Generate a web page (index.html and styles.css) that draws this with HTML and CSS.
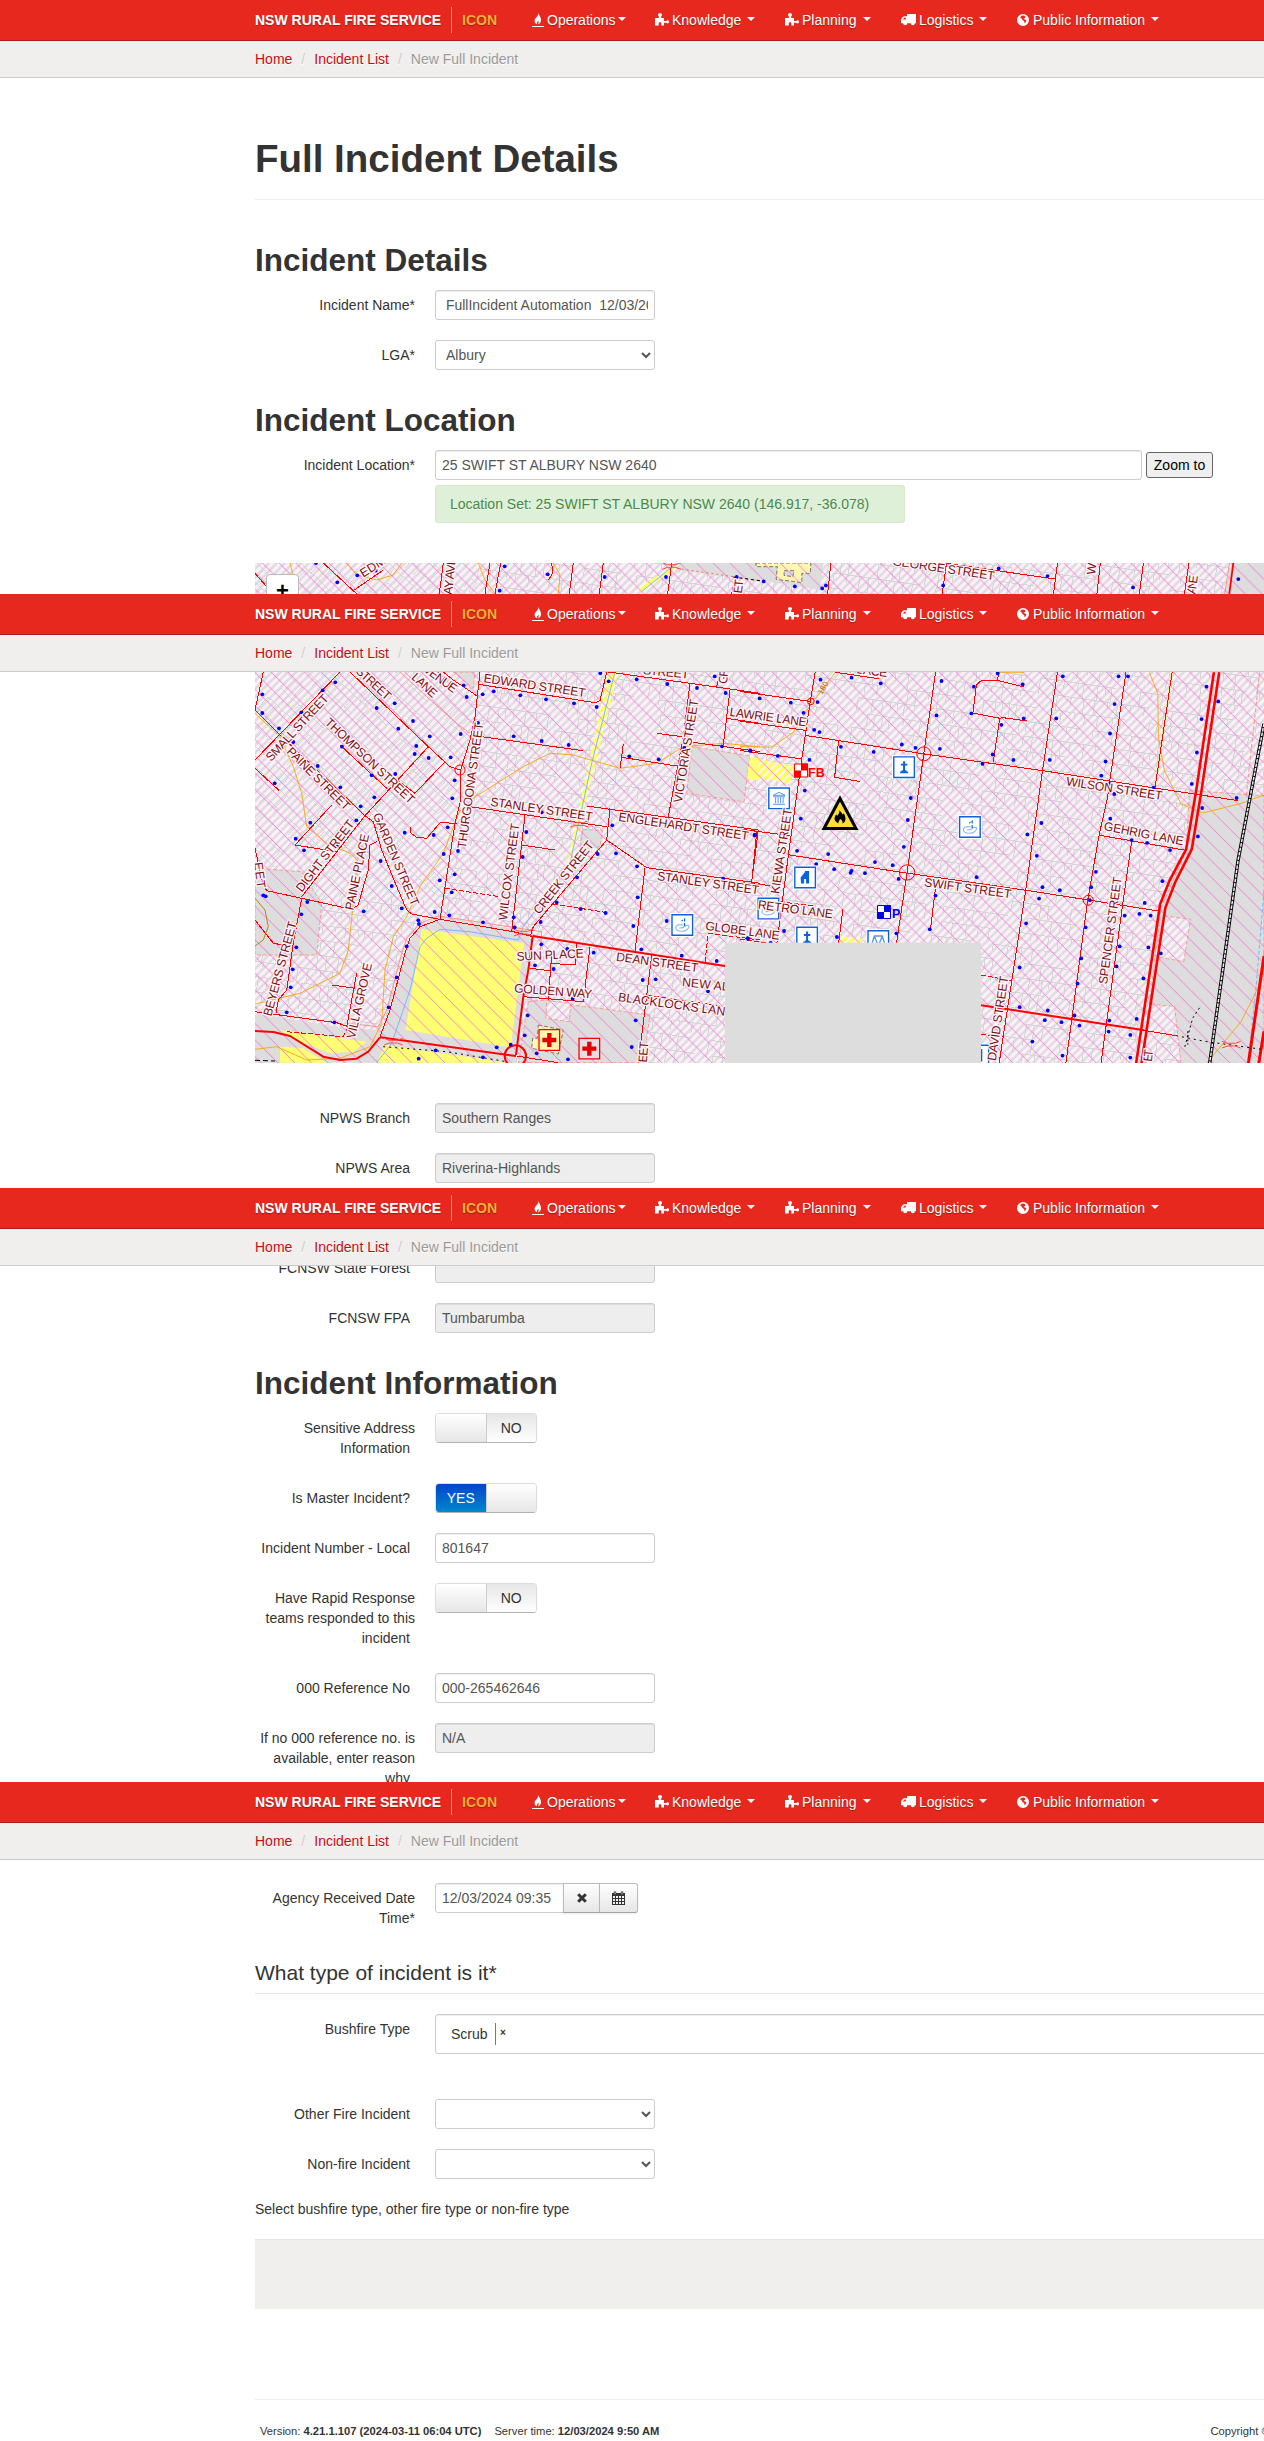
FILE: index.html
```html
<!DOCTYPE html>
<html lang="en">
<head>
<meta charset="utf-8">
<title>New Full Incident - ICON</title>
<link rel="stylesheet" href="styles.css">
</head>
<body>
<svg class="sprite" aria-hidden="true">
  <symbol id="i-fire" viewBox="0 0 12 14"><path d="M6.400 0C7 2.400 9 4 9 7.200c0 2.200-1.200 3.400-2.900 4.200.7-1.500.8-2.700-.1-3.800.1 1.100-1.100 1.700-1.100 2.700 0 .4 0 .7.2 1C3.500 10.800 2.600 9.500 2.600 7.700 2.600 5 6.600 3.600 6.400 0z"/><path d="M0 13h12v1H0z"/></symbol>
  <symbol id="i-puzzle" viewBox="0 0 14 13"><path fill-rule="evenodd" d="M0 5h3.800V3.300C3.300 3 3 2.400 3 1.800 3 .7 3.900 0 5 0s2 .7 2 1.800c0 .6-.3 1.200-.8 1.500V5H9v2.900h2.300c.3-.4.800-.7 1.300-.7.900 0 1.400.7 1.400 1.600s-.5 1.600-1.400 1.600c-.5 0-1-.3-1.300-.7H9v2.800H6.300v-2.100c0-.8-.6-1.200-1.300-1.200s-1.300.4-1.300 1.200v2.100H0z"/></symbol>
  <symbol id="i-truck" viewBox="0 0 15 12"><path fill-rule="evenodd" d="M6 0h9v9.300h-1.200a2 2 0 0 1-4 0H6.200a2 2 0 0 1-4 0H0V6c0-1.600 2.300-3.800 3.500-3.800H6zM1.600 5.600h3.200V3.400h-1z"/><circle cx="4.200" cy="9.700" r="1.400"/><circle cx="11.800" cy="9.700" r="1.400"/></symbol>
  <symbol id="i-globe" viewBox="0 0 12 12"><path fill-rule="evenodd" d="M6 0a6 6 0 1 1 0 12A6 6 0 0 1 6 0zM5 1.700 7 1.500 8.500 2.800 7.800 4.200 6.500 4.500 7.800 5.600 9.500 6.200 8.700 8.300 7.500 9.300 7.200 7.200 5.300 5.800 4.500 4.300 3.300 3.800 3.700 2.500z"/></symbol>
</svg>

<section class="screen">
  <header class="navbar">
    <span class="brand">NSW RURAL FIRE SERVICE</span><span class="app">ICON</span>
    <nav class="menu">
      <a class="tight"><svg class="fire"><use href="#i-fire"/></svg>Operations<i class="caret"></i></a>
      <a><svg class="puzzle"><use href="#i-puzzle"/></svg>Knowledge<i class="caret"></i></a>
      <a><svg class="puzzle"><use href="#i-puzzle"/></svg>Planning<i class="caret"></i></a>
      <a><svg class="truck"><use href="#i-truck"/></svg>Logistics<i class="caret"></i></a>
      <a><svg class="globe"><use href="#i-globe"/></svg>Public Information<i class="caret"></i></a>
    </nav>
  </header>
  <div class="crumbs"><a>Home</a><b>/</b><a>Incident List</a><b>/</b><span>New Full Incident</span></div>
  <main class="content">
    <h1>Full Incident Details</h1>
    <h2>Incident Details</h2>
    <div class="row"><label>Incident Name*</label><input type="text" value=" FullIncident Automation  12/03/2024"></div>
    <div class="row"><label>LGA*</label><select><option>Albury</option></select></div>
    <h2 class="later">Incident Location</h2>
    <div class="row location">
      <label>Incident Location*</label>
      <div>
        <div class="lookup"><input type="text" value="25 SWIFT ST ALBURY NSW 2640"><button>Zoom to</button></div>
        <div class="alert">Location Set: 25 SWIFT ST ALBURY NSW 2640 (146.917, -36.078)</div>
      </div>
    </div>
    <div class="map map-top"><svg class="tiles" viewBox="255 563 1009 31"></svg><span class="zoom-in">+</span></div>
  </main>
</section>

<section class="screen">
  <header class="navbar">
    <span class="brand">NSW RURAL FIRE SERVICE</span><span class="app">ICON</span>
    <nav class="menu">
      <a class="tight"><svg class="fire"><use href="#i-fire"/></svg>Operations<i class="caret"></i></a>
      <a><svg class="puzzle"><use href="#i-puzzle"/></svg>Knowledge<i class="caret"></i></a>
      <a><svg class="puzzle"><use href="#i-puzzle"/></svg>Planning<i class="caret"></i></a>
      <a><svg class="truck"><use href="#i-truck"/></svg>Logistics<i class="caret"></i></a>
      <a><svg class="globe"><use href="#i-globe"/></svg>Public Information<i class="caret"></i></a>
    </nav>
  </header>
  <div class="crumbs"><a>Home</a><b>/</b><a>Incident List</a><b>/</b><span>New Full Incident</span></div>
  <main class="content">
    <div class="map map-main"><svg class="tiles" viewBox="255 672 1009 391"></svg></div>
    <div class="row"><label>NPWS Branch<s></s></label><input type="text" value="Southern Ranges" readonly></div>
    <div class="row"><label>NPWS Area<s></s></label><input type="text" value="Riverina-Highlands" readonly></div>
  </main>
</section>

<section class="screen">
  <header class="navbar">
    <span class="brand">NSW RURAL FIRE SERVICE</span><span class="app">ICON</span>
    <nav class="menu">
      <a class="tight"><svg class="fire"><use href="#i-fire"/></svg>Operations<i class="caret"></i></a>
      <a><svg class="puzzle"><use href="#i-puzzle"/></svg>Knowledge<i class="caret"></i></a>
      <a><svg class="puzzle"><use href="#i-puzzle"/></svg>Planning<i class="caret"></i></a>
      <a><svg class="truck"><use href="#i-truck"/></svg>Logistics<i class="caret"></i></a>
      <a><svg class="globe"><use href="#i-globe"/></svg>Public Information<i class="caret"></i></a>
    </nav>
  </header>
  <div class="crumbs"><a>Home</a><b>/</b><a>Incident List</a><b>/</b><span>New Full Incident</span></div>
  <main class="content scrolled">
    <div class="row"><label>FCNSW State Forest<s></s></label><input type="text" value="" readonly></div>
    <div class="row"><label>FCNSW FPA<s></s></label><input type="text" value="Tumbarumba" readonly></div>
    <h2 class="later">Incident Information</h2>
    <div class="row"><label>Sensitive Address Information<s></s></label><div class="switch"><span class="knob"></span><span class="off">NO</span></div></div>
    <div class="row"><label>Is Master Incident?<s></s></label><div class="switch"><span class="on">YES</span><span class="knob"></span></div></div>
    <div class="row"><label>Incident Number - Local<s></s></label><input type="text" value="801647"></div>
    <div class="row"><label>Have Rapid Response teams responded to this incident<s></s></label><div class="switch"><span class="knob"></span><span class="off">NO</span></div></div>
    <div class="row"><label>000 Reference No<s></s></label><input type="text" value="000-265462646"></div>
    <div class="row"><label>If no 000 reference no. is available, enter reason why<s></s></label><input type="text" value="N/A" readonly></div>
  </main>
</section>

<section class="screen last">
  <header class="navbar">
    <span class="brand">NSW RURAL FIRE SERVICE</span><span class="app">ICON</span>
    <nav class="menu">
      <a class="tight"><svg class="fire"><use href="#i-fire"/></svg>Operations<i class="caret"></i></a>
      <a><svg class="puzzle"><use href="#i-puzzle"/></svg>Knowledge<i class="caret"></i></a>
      <a><svg class="puzzle"><use href="#i-puzzle"/></svg>Planning<i class="caret"></i></a>
      <a><svg class="truck"><use href="#i-truck"/></svg>Logistics<i class="caret"></i></a>
      <a><svg class="globe"><use href="#i-globe"/></svg>Public Information<i class="caret"></i></a>
    </nav>
  </header>
  <div class="crumbs"><a>Home</a><b>/</b><a>Incident List</a><b>/</b><span>New Full Incident</span></div>
  <main class="content dates">
    <div class="row"><label>Agency Received Date Time*</label>
      <div class="datetime"><input type="text" value="12/03/2024 09:35">
        <span class="addon clear"><svg width="10" height="10" viewBox="0 0 10 10"><path d="M1.200 1.200 8.800 8.800M8.800 1.200 1.200 8.800" stroke="#333" stroke-width="3"/></svg></span>
        <span class="addon pick"><svg width="13" height="14" viewBox="0 0 13 14"><path fill="#333" fill-rule="evenodd" d="M0 2h1.800V.5h2.400V2h4.600V.5h2.400V2H13v12H0zM1 5v2h2V5zM4 5v2h2V5zM7 5v2h2V5zM10 5v2h2V5zM1 8v2h2V8zM4 8v2h2V8zM7 8v2h2V8zM10 8v2h2V8zM1 11v2h2v-2zM4 11v2h2v-2zM7 11v2h2v-2zM10 11v2h2v-2z"/><path stroke="#fff" stroke-width=".8" d="M3 1.300v2M10 1.300v2"/></svg></span>
      </div>
    </div>
    <h3>What type of incident is it*</h3>
    <div class="row types"><label>Bushfire Type<s></s></label><div class="tokens"><span class="token">Scrub</span><span class="remove">×</span></div></div>
    <div class="row"><label>Other Fire Incident<s></s></label><select><option></option></select></div>
    <div class="row"><label>Non-fire Incident<s></s></label><select><option></option></select></div>
    <p class="hint">Select bushfire type, other fire type or non-fire type</p>
    <div class="actions"></div>
    <footer class="footer">
      <span>Version: <strong>4.21.1.107 (2024-03-11 06:04 UTC)</strong></span>
      <span>Server time: <strong>12/03/2024 9:50 AM</strong></span>
      <span class="copy">Copyright ©</span>
    </footer>
  </main>
</section>
<script src="map.js"></script>
</body>
</html>
```
FILE: styles.css
```css
* { box-sizing: border-box; }
html { overflow: hidden; }
body { margin: 0; width: 1264px; overflow: hidden; background: #fff; color: #333; font: 14px/20px "Liberation Sans", Arial, sans-serif; }
.sprite { position: absolute; width: 0; height: 0; }
.screen { height: 594px; overflow: hidden; }
.screen.last { height: 659px; }

.navbar { display: flex; align-items: center; height: 41px; padding-left: 255px; background: #e6281e; border-bottom: 1px solid #ac1b14; color: #fff; text-shadow: 0 1px 1px rgba(90, 30, 20, .6); }
.brand { width: 197px; height: 26px; line-height: 26px; font-weight: bold; border-right: 1px solid #f08d88; white-space: nowrap; }
.app { width: 80px; padding-left: 10px; font-weight: bold; color: #f5ae33; }
.menu { display: grid; grid-template-columns: 123px 130px 116px 116px auto; }
.menu a { display: flex; align-items: center; white-space: nowrap; }
.menu svg { fill: #fff; flex: none; }
.fire { width: 12px; height: 14px; margin-right: 3px; }
.puzzle { width: 14px; height: 13px; margin: -2px 3px 0 0; }
.truck { width: 15px; height: 12px; margin-right: 3px; }
.globe { width: 12px; height: 12px; margin-right: 4px; }
.caret { margin: 0 0 2px 6px; border: 4px solid transparent; border-top-color: #fff; border-bottom: 0; }
.tight .caret { margin-left: 3px; }

.crumbs { display: flex; align-items: center; height: 37px; padding-left: 255px; background: #f0efed; border-bottom: 1px solid #ccc; color: #999; text-shadow: 0 1px 0 #fff; }
.crumbs a { color: #c8090f; }
.crumbs b { margin: 0 9px; font-weight: normal; color: #ccc; }

.content { width: 1170px; margin-left: 255px; }
h1, h2, h3 { margin: 0; line-height: 40px; }
h1 { padding: 61px 0 20px; margin-bottom: 40px; font-size: 38.500px; border-bottom: 1px solid #eee; }
h2 { margin-bottom: 10px; font-size: 31.500px; }
h2.later { margin-top: 30px; }
h3 { margin: 20px 0; font-size: 21px; font-weight: normal; border-bottom: 1px solid #e5e5e5; }
.row { display: flex; align-items: flex-start; margin-bottom: 20px; }
label { flex: none; width: 160px; margin-right: 20px; padding: 5px 0; text-align: right; }
label s { padding-right: 5px; }
input, select { width: 220px; height: 30px; margin: 0; padding: 4px 6px; border: 1px solid #ccc; border-radius: 3px; background: #fff; color: #555; font: 14px/20px "Liberation Sans", Arial, sans-serif; }
input { box-shadow: inset 0 1px 1px rgba(0, 0, 0, .075); }
input[readonly] { background: #eee; }
.lookup { display: flex; align-items: center; gap: 4px; }
.lookup input { width: 707px; }
button { width: 67px; height: 26px; padding: 0; border: 1px solid #666; border-radius: 3px; background: #efefef; color: #000; font: 14px "Liberation Sans", Arial, sans-serif; }
.location { margin-bottom: 40px; }
.alert { width: 470px; height: 38px; margin-top: 5px; padding: 8px 14px; border: 1px solid #d6e9c6; border-radius: 3px; background: #dff0d8; color: #468847; text-shadow: 0 1px 0 rgba(255, 255, 255, .5); }

.map { position: relative; width: 1009px; overflow: hidden; background: #fdeef8; }
.map-top { height: 31px; }
.map-main { height: 391px; margin-bottom: 40px; }
.tiles { display: block; width: 100%; height: 100%; }
.zoom-in { position: absolute; left: 11px; top: 11px; width: 33px; height: 34px; border: 1px solid #bbb; border-radius: 4px; background: #fff; color: #000; font: bold 22px/31px "Liberation Sans", Arial, sans-serif; text-align: center; }
.road-label { font: 12.300px "Liberation Sans", Arial, sans-serif; fill: #7b0f10; stroke: #fff4fb; stroke-width: 2.500px; stroke-linejoin: round; paint-order: stroke; }
.height-label { font: 8px "Liberation Sans", Arial, sans-serif; fill: #a86400; }
.marker { font: bold 12.500px "Liberation Sans", Arial, sans-serif; }

.scrolled { margin-top: -13px; position: relative; z-index: -1; }
.switch { display: flex; width: 102px; height: 30px; border: 1px solid #ddd; border-bottom-color: #b3b3b3; border-radius: 4px; overflow: hidden; line-height: 28px; text-align: center; }
.switch span { flex: 1; }
.knob { background: linear-gradient(#fff, #e6e6e6); }
.off { border-left: 1px solid #ccc; background: linear-gradient(#e6e6e6, #fff); }
.on { background: linear-gradient(#04c, #08c); color: #fff; border-right: 1px solid #ccc; }

.dates { padding-top: 23px; }
.datetime { display: flex; }
.datetime input { width: 129px; border-radius: 3px 0 0 3px; }
.addon { display: flex; align-items: center; justify-content: center; height: 30px; margin-left: -1px; border: 1px solid #bbb; border-bottom-color: #a2a2a2; background: linear-gradient(#fff, #e6e6e6); box-shadow: 0 1px 2px rgba(0, 0, 0, .08); }
.clear { width: 37px; }
.pick { width: 39px; border-radius: 0 3px 3px 0; }
.types { margin-bottom: 45px; }
.tokens { display: flex; align-items: center; width: 990px; height: 40px; padding-left: 15px; border: 1px solid #ccc; border-radius: 3px; box-shadow: inset 0 1px 1px rgba(0, 0, 0, .075); }
.token { height: 22px; width: 45px; line-height: 22px; border-right: 1px solid #5f9c18; }
.remove { margin: -3px 0 0 4px; font-size: 10px; font-weight: bold; }
.hint { margin: 0 0 20px; }
.actions { height: 70px; margin-bottom: 90px; background: #f0efed; border-top: 1px solid #e5e5e5; }
.footer { display: flex; gap: 13px; padding: 21px 0 0 5px; border-top: 1px solid #eee; font-size: 11.200px; white-space: nowrap; }
.copy { margin-left: 538px; }
```
FILE: map.js
```js
// Street map of central Albury, drawn as SVG from the point lists below.
// West (A) and east (B) sheets have their own local coordinates.
var sheets = { A: [240, 550, 1 / 3], B: [740, 550, 0.3342] };
function pt(s, x, y) { var t = sheets[s]; return [t[0] + x * t[2], t[1] + y * t[2]]; }
function path(s, list) {
  var n = list.split(/[ ,]+/).map(Number), d = '';
  for (var i = 0; i < n.length; i += 2) {
    var p = pt(s, n[i], n[i + 1]);
    d += (i ? 'L' : 'M') + p[0].toFixed(1) + ' ' + p[1].toFixed(1);
  }
  return d;
}
function line(s, list, color, w, dash) {
  return '<path d="' + path(s, list) + '" fill="none" stroke="' + color + '" stroke-width="' + w + '"' + (dash ? ' stroke-dasharray="' + dash + '"' : '') + ' stroke-linejoin="round"/>';
}
function area(s, list, fill, edge) {
  return '<path d="' + path(s, list) + 'Z" fill="' + fill + '"' + (edge ? ' stroke="' + edge + '" stroke-width=".8" stroke-dasharray="4 2"' : '') + '/>';
}

// Property boundaries: rows of lots with irregular frontages.
var seed = 7;
function rnd() { seed = (seed * 16807) % 2147483647; return seed / 2147483647; }
function lots(angle) {
  var d = '';
  for (var y = -700; y < 900; y += 15) {
    var x = -800;
    while (x < 900) {
      var run = 30 + rnd() * 60, h = 9 + rnd() * 8;
      d += 'M' + x.toFixed(0) + ' ' + y + 'h' + run.toFixed(0);
      for (var k = x; k < x + run; k += 6 + rnd() * 9) d += 'M' + k.toFixed(0) + ' ' + y + 'v' + (rnd() > 0.4 ? h : h / 2).toFixed(0);
      x += run + 8 + rnd() * 24;
    }
  }
  return '<path transform="translate(760 800) rotate(' + angle + ')" d="' + d + '" fill="none" stroke="#d2d0d2" stroke-width=".9"/>';
}

var roads = {
  A: ['45,630 300,366', '330,366 565,590 630,650 660,660', '565,590 375,797 185,1040', '300,585 440,715', '45,480 120,555 375,797 400,815 425,900 470,1010 500,1080 515,1092 600,1108 820,1145 880,1160', '615,635 525,730 465,685', '275,765 165,885 290,905', '45,655 118,722', '410,875 390,885 385,960 370,1010 355,1065 335,1078 185,1045 80,1022 68,1000 45,895', '185,1045 160,1180 140,1320 115,1350 108,1390', '45,1385 290,1418 325,1430', '350,1270 320,1430', '275,1305 345,1315', '720,366 705,500 690,570 662,660 660,760 645,820 600,1108', '715,403 1065,458 1080,452 1100,366', '725,560 1030,602', '690,770 1100,830', '1040,768 1555,840', '855,795 815,1145', '845,885 945,900', '510,830 513,850 530,862 560,865 600,818 650,820', '1350,400 1330,560 1285,800', '1105,366 1350,400 1560,430', '1250,550 1325,560', '1360,577 1560,605', '1150,583 1140,655', '1145,622 1310,648', '1110,775 1100,870 1220,953 1560,1000', '1100,870 880,1130 870,1160', '1215,955 1185,1205', '1555,840 1535,995', '600,1108 540,1130 510,1165 495,1210 450,1380 420,1460', '930,1240 1005,1245 1010,1180', '1050,1190 1030,1355 850,1340', '870,1255 930,1262', '935,1210 925,1350', '1235,1215 1220,1335 1195,1538', '1470,420 1450,585', '1460,505 1560,520', '1440,366 1430,410', '830,1518 955,1538', '70,366 45,480', '610,366 640,390 710,437', '45,1110 100,1180 130,1185', '250,39 340,122 430,60', '340,122 350,131', '610,39 598,131', '750,39 735,131', '782,39 765,131', '1000,39 988,131', '1090,39 1078,131', '1295,39 1283,131', '1485,80 1475,131', '45,70 80,110', '935,39 938,70 925,90'],
  B: ['0,423 210,453', '225,366 210,453 185,625 145,910 110,1178', '0,512 200,540', '198,555 550,610 905,660 1240,712 1490,750', '0,600 185,625', '295,570 283,680 360,693', '585,366 550,610 500,965 468,1178', '950,366 905,660 855,1018 775,1538', '1155,366 1105,700 1100,740 1075,850 1040,1050 975,1538', '0,835 150,855', '50,845 35,995', '145,912 500,967 855,1018 1250,1080', '1073,853 1330,898', '1172,870 1145,1060 1080,1538', '1293,366 1242,710', '775,366 770,390 720,392 707,405 697,488 775,503 790,502 860,512', '770,390 850,410', '777,503 758,635', '285,366 415,385', '585,1010 570,1135', '308,1075 295,1178', '0,995 100,1005', '1205,1437 1305,1453', '272,39 262,131', '618,39 605,131', '610,39 945,87', '950,39 938,131', '1078,39 1068,131', '1207,39 1195,131', '1343,39 1330,131']
};
var dashed = { A: ['325,1430 310,1460 140,1445 135,1450', '615,1015 780,1040', '940,1062 1095,1087', '1395,1235 1405,1150 1560,1170', '1220,1335 1455,1370'], B: ['100,1050 220,1065', '0,1165 100,1178', '721,1272 810,1288', '721,1450 790,1455'] };
var major = { A: ['878,1158 1455,1248', '878,1158 865,1260 850,1340 828,1515', '420,1462 828,1518', '45,1443 100,1446 150,1458 250,1520 300,1530 350,1526 385,1505 420,1462'], B: ['721,1362 1210,1437'] };
var highway = ['1418,366 1365,720 1335,895 1285,990 1257,1060 1185,1538', '1434,366 1381,720 1352,895 1302,995 1273,1070 1201,1538'];

// [name, start x, start y, end x, end y] of the baseline
var names = {
  A: [['SMALL STREET', 93, 636, 268, 447], ['THOMPSON STREET', 253, 520, 510, 763], ['PAINE STREET', 138, 607, 316, 783], ['DIGHT STREET', 185, 1028, 345, 822], ['PAINE PLACE', 340, 1082, 388, 855], ['GARDEN STREET', 398, 795, 515, 1070], ['BEYERS STREET', 94, 1400, 170, 1118], ['VILLA GROVE', 344, 1468, 396, 1242], ['THURGOONA STREET', 677, 897, 730, 520], ['EDWARD STREET', 730, 396, 1035, 441], ['STANLEY STREET', 750, 767, 1056, 812], ['WILCOX STREET', 800, 1112, 838, 822], ['CREEK STREET', 898, 1095, 1063, 885], ['VICTORIA STREET', 1325, 760, 1375, 450], ['ENGLEHARDT STREET', 1134, 812, 1524, 870], ['STANLEY STREET', 1250, 990, 1555, 1033], ['SUN PLACE', 830, 1232, 1032, 1222], ['DEAN STREET', 1127, 1232, 1373, 1266], ['GOLDEN WAY', 822, 1327, 1055, 1345], ['NEW AL', 1325, 1308, 1465, 1323], ['BLACKLOCKS LANE', 1133, 1353, 1478, 1400], ['STREET', 345, 366, 440, 452], ['LANE', 512, 385, 578, 445], ['VENUE', 548, 362, 640, 430], ['EDM', 370, 83, 440, 38], ['AY AVE', 636, 135, 647, 22], ['GR', 1460, 403, 1466, 355], ['STREET', 1208, 372, 1345, 386], ['ET', 1505, 131, 1510, 90], ['EET', 1220, 1538, 1225, 1475], ['EET', 42, 938, 52, 1015]],
  B: [['LAWRIE LANE', -32, 496, 198, 528], ['WILSON STREET', 975, 704, 1262, 748], ['GEHRIG LANE', 1087, 838, 1325, 884], ['SWIFT STREET', 550, 1006, 810, 1042], ['KIEWA STREET', 117, 1030, 156, 775], ['SPENCER STREET', 1098, 1300, 1142, 980], ['RETRO LANE', 52, 1073, 276, 1102], ['GLOBE LANE', -105, 1136, 117, 1166], ['DAVID STREET', 765, 1530, 803, 1277], ['GEORGE STREET', 455, 45, 760, 90], ['W', 1062, 75, 1066, 42], ['ANE', 1362, 133, 1370, 78], ['ET', 1232, 1532, 1236, 1495], ['PLACE', 325, 366, 440, 380]]
};

var dots = {
  A: '67,433 67,489 117,535 160,576 184,487 248,421 286,397 306,590 233,648 301,712 104,700 211,818 167,866 192,901 290,887 349,811 362,769 403,742 395,676 466,672 410,474 464,460 519,513 475,536 569,559 529,588 524,612 566,624 632,622 662,552 680,441 671,406 728,433 761,424 841,436 918,448 1002,460 1070,471 1106,394 1081,370 1190,388 1282,402 1371,414 1424,379 1457,429 714,519 821,559 905,573 986,585 644,691 637,745 623,832 581,855 494,848 654,903 611,912 644,973 599,991 635,1027 584,1086 628,1096 729,1117 535,1111 537,1122 485,1075 455,1008 422,933 371,1084 184,1093 202,1056 70,1036 77,1039 169,1192 158,1258 152,1312 140,1387 283,1417 446,1372 470,1282 500,1189 859,846 848,921 905,787 1117,826 1073,912 1128,910 1011,982 950,1057 1022,1077 1097,1089 1191,949 1193,1042 1180,1128 1204,1198 821,1102 824,1132 902,1116 904,1183 982,1197 1061,1208 885,1246 941,1257 1280,1113 1325,1217 1430,1233 1247,1288 1208,1290 1404,1324 1187,1411 1175,1491 863,1396 854,1456 890,1510 984,1528 812,1484 770,1492 729,1522 587,1501 536,1526 998,1346 1168,619 1256,628 1333,594 1446,589 1531,601 1544,854 1450,986 1524,1164 292,97 352,76 407,62 794,49 779,122 923,73 1094,81 1278,81 1490,81 228,39',
  B: '59,444 152,457 232,455 241,388 334,382 421,399 190,487 222,538 238,545 302,589 31,601 113,616 208,628 400,604 484,582 525,592 598,595 588,495 603,392 700,409 692,489 782,523 849,504 846,402 771,369 756,612 818,628 726,640 966,378 946,504 1133,378 1161,378 1121,461 1107,549 1094,633 1081,675 927,628 1105,700 1120,730 1238,711 1352,700 1367,606 1381,506 1396,409 1431,453 1486,742 1383,772 1370,857 1287,898 1172,868 1218,876 1108,804 902,817 860,851 888,915 1065,963 1051,1009 957,1018 905,1009 895,1043 1047,1048 1211,1056 1195,1089 1229,1094 1151,1094 1264,991 1034,1129 1136,1186 1127,1246 1222,1189 1259,1207 1207,1282 1021,1222 1010,1297 856,1117 837,1249 837,1368 921,1378 912,1407 962,1413 1001,1393 1016,1423 1105,1408 1103,1441 1168,1451 1187,1403 875,1471 965,1513 1168,1519 511,742 502,808 490,888 457,943 404,934 374,967 334,960 331,966 282,955 264,910 171,900 182,804 194,720 228,940 475,984 585,1034 708,979 568,1135 468,1147 132,1140 290,1158 44,854 24,1163 92,1176 71,94 164,109 246,115 257,106 608,106 774,55 920,78 1176,112 1491,87'
};

function facility(s, x, y, glyph) {
  var p = pt(s, x, y);
  return '<g transform="translate(' + p[0].toFixed(1) + ' ' + p[1].toFixed(1) + ')"><path d="M-1-1h24v24H-1z" fill="#fff"/><path d="M.7.700h20.600v20.600H.7z" fill="#fff" stroke="#0b62dd" stroke-width="1.400"/>' + glyph + '</g>';
}
var church = '<path d="M10 5h2v2.500h2.200v1.800H12V14h1.500v1.200H15V17H7v-1.800h1.500V14H10V9.300H7.800V7.500H10z" fill="#0b62dd"/>';
var museum = '<path d="M5 8l6-3 6 3zM5 9.500h12M7.500 10v6M10 10v6M12.500 10v6M15 10v6M5 17h12" fill="none" stroke="#5b97ea" stroke-width="1"/>';
var water = '<path d="M12 11C8 10 4 11 4.500 14.500 6 18 13 18 16 15.500 19 12 18 11 15 11.500c-2 1-3 3-7 2.500" fill="none" stroke="#8db9f2" stroke-width="1.100"/><path d="M13.300 12V5l-3 2" fill="none" stroke="#0b62dd" stroke-width="1.200" stroke-dasharray="3 1.500"/>';
var house = '<path d="M6.500 11l4-5 .5-1.500h4V17h-3v-4.500h-2V17h-3z" fill="#0b62dd"/>';
var court = '<path d="M4 16l3-10h8l3 10M7 6l4 10M15 6l-4 10M2.500 16h5M14.500 16h5" fill="none" stroke="#5b97ea" stroke-width="1.300"/>';

function crisp(inner) { return '<g shape-rendering="crispEdges">' + inner + '</g>'; }

var g = '<rect x="255" y="560" width="1009" height="505" fill="url(#hatch)"/>';
g += crisp('<g clip-path="url(#grid-town)">' + lots(8) + '</g><g clip-path="url(#west-town)">' + lots(43) + '</g>');
g += area('A', '45,955 185,965 245,1060 230,1215 45,1215', '#ddd', '#ff8a80');
g += area('A', '1355,590 1530,618 1512,755 1340,730', '#ddd', '#ff8a80');
g += area('A', '640,366 705,366 700,415', '#ddd', '#ff8a80') + area('A', '1028,838 1088,842 1080,890 1020,900', '#ddd', '#ff8a80');
g += area('A', '600,1100 870,1145 855,1290 828,1538 45,1538 45,1390 320,1435 425,1440 500,1190 540,1125', '#ddd');
g += area('A', '865,1355 920,1350 1000,1365 1230,1395 1210,1538 835,1538', '#ddd', '#ff8a80');
g += area('A', '920,1352 992,1360 988,1415 918,1405', 'url(#hatch)', '#ff8a80');
g += area('A', '1320,39 1560,39 1560,95 1310,60', '#ddd');
g += area('B', '0,39 250,39 240,120 0,80', '#ddd');
g += area('B', '1470,39 1568,39 1568,131 1450,131', '#ddd');
g += area('B', '1345,720 1568,735 1568,1538 1320,1538 1300,1365 1225,1360 1260,1070 1335,900', '#ddd', '#ff8a80');
g += area('B', '1270,1095 1348,1105 1328,1232 1240,1215', 'url(#hatch)', '#ff8a80');
g += area('B', '1240,1365 1298,1368 1290,1440 1225,1430', 'url(#hatch)');
g += area('A', '545,1138 852,1180 812,1492 497,1440', '#ffff73');
g += area('A', '120,1440 380,1475 340,1505 270,1510 190,1478', '#ffff73') + area('A', '120,1490 190,1495 260,1538 120,1538', '#ffff73') + area('A', '435,1485 800,1538 410,1538', '#ffff73');
g += area('A', '1530,620 1560,625 1560,690 1522,685', '#ffff73') + area('B', '30,620 58,625 52,690 22,685', '#ffff73') + area('B', '58,625 160,645 150,700 52,680', 'url(#yellow-hatch)') + area('B', '300,1155 368,1165 360,1178 298,1178', 'url(#yellow-hatch)');
g += area('A', '1105,366 1135,366 985,965 975,965 1005,830', 'url(#yellow-hatch)') + area('A', '1290,55 1325,39 1205,131 1195,110', 'url(#yellow-hatch)');
g += area('B', '48,39 212,39 210,70 185,70 185,98 160,94 108,88 112,50 48,50', '#fff7b0', '#555') + area('B', '132,62 162,62 158,80 132,76', '#ddd', '#555');
g += area('A', '895,1425 970,1440 955,1512 875,1495 878,1465 892,1465', '#fff7b0', '#555');
g += crisp('<rect x="255" y="560" width="1009" height="505" fill="url(#zone)"/>');
[['A', '45,490 120,560 160,650 185,730 200,830 260,880 330,910 352,930 340,1060 325,1200 300,1270 180,1330 45,1362'], ['A', '690,750 850,650 930,610 1000,615 1140,655 1250,640 1330,590 1450,580 1560,590'], ['A', '660,780 610,910 540,1010 500,1100 460,1160 435,1260 425,1420 390,1490 300,1525 200,1530 110,1490 45,1498'], ['A', '150,39 160,80'], ['A', '320,39 350,75 410,90 460,75 485,39'], ['A', '715,39 735,90 765,131'], ['A', '940,39 960,75 955,131'], ['B', '0,588 95,590 160,545 200,480 285,366'], ['B', '775,366 850,366'], ['B', '1225,366 1250,430 1252,560 1270,660 1320,760 1385,787 1500,758 1568,733'], ['B', '1395,1538 1500,1410 1550,1310 1568,1200']].forEach(function (c) { g += line(c[0], c[1], '#ffa500', 0.9); });
g += line('A', '45,1045 75,1080 85,1130 70,1170 45,1188', '#b87800', 0.9);
g += line('A', '1125,366 1055,640 990,940 850,1130 835,1170 690,1145 600,1138 560,1165 540,1190 510,1320 455,1480 410,1538', '#6fb1ff', 0.9) + line('A', '1310,39 1205,125', '#6fb1ff', 0.9) + line('B', '1568,1020 1545,1300 1520,1538', '#6fb1ff', 0.9, '4 2');
g += line('A', '480,366 560,440 650,520 690,550', '#ff8a80', 0.9) + line('A', '595,1098 905,1145 900,1215', '#ff8a80', 0.9) + line('A', '595,1098 540,1120 500,1165 485,1210 440,1380 415,1430 320,1420', '#ff8a80', 0.9) + line('B', '1555,366 1515,735', '#ff8a80', 0.9, '4 2') + line('B', '1465,39 1450,131', '#ff8a80', 0.9) + line('A', '1310,55 1560,92', '#ff5a50', 0.9, '2 3') + line('B', '1293,366 1242,710', '#f7e94a', 1.6);
['A', 'B'].forEach(function (s) {
  roads[s].forEach(function (r) { g += crisp(line(s, r, '#f00', 1)); });
  dashed[s].forEach(function (r) { g += crisp(line(s, r, '#f00', 1, '5 2')); });
  major[s].forEach(function (r) { g += line(s, r, '#f00', 2); });
});
g += line('B', highway[0], '#f00', 2.600) + line('B', highway[1], '#f00', 2.600) + line('B', '1476,39 1464,131', '#f00', 1.800) + line('B', '1568,1215 1521,1538', '#f00', 3) + line('B', '1568,1440 1552,1538', '#f00', 3);
g += line('B', '1568,520 1490,930 1405,1538', '#000', 3.400) + line('B', '1568,520 1490,930 1405,1538', '#eee', 1.500, '3.500 1');
g += line('B', '1375,1370 1355,1400 1330,1490', '#000', 1, '2 3') + line('B', '1305,1453 1390,1470 1568,1495', '#000', 1, '2 4') + line('B', '1340,1440 1340,1480', '#000', 1, '2 2') + line('A', '45,1531 105,1533', '#000', 1, '5 3') + line('A', '430,1490 620,1505 800,1535', '#000', 1, '2 4') + line('A', '1480,81 1560,92', '#000', 1, '3 3');
[['A', 660, 660, 15, 1], ['A', 826, 1518, 32, 2], ['B', 212, 453, 10, 1], ['B', 550, 610, 21, 1], ['B', 500, 965, 23, 1], ['B', 1042, 1048, 15, 1]].forEach(function (c) { var p = pt(c[0], c[1], c[2]); g += '<circle cx="' + p[0] + '" cy="' + p[1] + '" r="' + c[3] / 3 + '" fill="none" stroke="#f00" stroke-width="' + c[4] + '"/>'; });
[['A', 850, 1148], ['A', 1018, 822], ['A', 460, 1475], ['A', 1295, 48], ['B', 1470, 1480]].forEach(function (b) { g += line(b[0], (b[1] - 28) + ',' + (b[2] - 10) + ' ' + (b[1] - 12) + ',' + (b[2] - 4) + ' ' + (b[1] + 12) + ',' + (b[2] - 4) + ' ' + (b[1] + 28) + ',' + (b[2] - 10), '#ff4a42', 1) + line(b[0], (b[1] - 28) + ',' + (b[2] + 10) + ' ' + (b[1] - 12) + ',' + (b[2] + 4) + ' ' + (b[1] + 12) + ',' + (b[2] + 4) + ' ' + (b[1] + 28) + ',' + (b[2] + 10), '#ff4a42', 1); });
['A', 'B'].forEach(function (s) {
  dots[s].split(' ').forEach(function (d) { var q = d.split(','), p = pt(s, +q[0], +q[1]); g += '<circle cx="' + p[0].toFixed(1) + '" cy="' + p[1].toFixed(1) + '" r="1.900" fill="#00f"/>'; });
});

// Points of interest, shown on the main map only.
var poi = facility('A', 1294, 1092, water) + facility('B', 84, 710, museum) + facility('B', 458, 617, church) + facility('B', 655, 796, water) + facility('B', 162, 947, house) + facility('B', 52, 1040, water) + facility('B', 168, 1127, church) + facility('B', 381, 1137, court) + facility('B', 680, 1480, house);
[[895, 1437], [1015, 1463]].forEach(function (h, i) {
  var p = pt('A', h[0], h[1]);
  poi += '<g transform="translate(' + p[0] + ' ' + p[1] + ')"><path d="M.7.700h20.600v20.600H.7z" fill="' + (i ? '#e8dde0' : '#fff7b0') + '" stroke="#f00" stroke-width="1.300"/><path d="M8.800 4h4.400v4.800H18v4.400h-4.800V18H8.800v-4.800H4V8.800h4.800z" fill="#e80000"/></g>';
});
poi += '<text class="height-label" transform="translate(822 695) rotate(-60)">180</text>';
poi += '<g transform="translate(794 763.500)"><path d="M.5.500h13v13H.5z" fill="#fff" stroke="#f00"/><path d="M7 0h7v7H7zM0 7h7v7H0z" fill="#f00"/><text class="marker" x="14" y="13" fill="#f00">FB</text></g>';
poi += '<g transform="translate(877 905)"><path d="M.5.500h13v13H.5z" fill="#fff" stroke="#00e"/><path d="M7 0h7v7H7zM0 7h7v7H0z" fill="#00e"/><text class="marker" x="15" y="12.500" fill="#00e">P</text></g>';
poi += '<path d="M840 798.500l16 30h-32z" fill="#ffde2e" stroke="#000" stroke-width="3"/><path d="M839.500 810c1 2 2.500 2.500 3 4.500l1.500-1c2 4 2.500 8-1.500 10 .5-2-.5-3.500-2.500-4.500-.5 2-2 2.500-1.500 4.500-5-2.500-4.500-5.500-2.500-9 .5 0 1 1 1 1.500 1.500-2 2.500-3 2.500-6z" fill="#000"/>';

function labels(top) {
  var out = '';
  ['A', 'B'].forEach(function (s) {
    names[s].forEach(function (n) {
      if ((n[2] < 200) !== top) return;
      var a = pt(s, n[1], n[2]), b = pt(s, n[3], n[4]), dx = b[0] - a[0], dy = b[1] - a[1];
      out += '<text class="road-label" transform="translate(' + a[0].toFixed(1) + ' ' + a[1].toFixed(1) + ') rotate(' + (Math.atan2(dy, dx) * 180 / Math.PI).toFixed(1) + ')" textLength="' + Math.hypot(dx, dy).toFixed(1) + '">' + n[0] + '</text>';
    });
  });
  return out;
}
var missing = '<rect x="725" y="942.700" width="256" height="121" fill="#ddd"/>';

var defs = '<defs><pattern id="hatch" width="8" height="8" patternUnits="userSpaceOnUse"><path d="M0 0h8v8H0z" fill="#ffeffa"/><path d="M-2 10L10-2M-2 2L2-2M6 10L10 6" stroke="#dedede" stroke-width="2.600"/></pattern>' +
  '<pattern id="yellow-hatch" width="8" height="8" patternUnits="userSpaceOnUse"><path d="M0 0h8v8H0z" fill="#fdf6ea"/><path d="M-2 10L10-2M-2 2L2-2M6 10L10 6" stroke="#ffff5c" stroke-width="3.400"/></pattern>' +
  '<pattern id="zone" width="16.700" height="16.700" patternUnits="userSpaceOnUse"><path d="M-2-2L18.700 18.700M14.700-2L18.700 2M-2 14.700L2 18.700" stroke="#fb62d3" stroke-width=".8"/></pattern>' +
  '<clipPath id="west-town"><path d="M255 560H478L470 760 440 900H255z"/></clipPath><clipPath id="grid-town"><path d="M478 560H1264V1065H255V900H440L470 760z"/></clipPath></defs>';
var tiles = document.querySelectorAll('.tiles');
tiles[0].innerHTML = defs + g + labels(true);
tiles[1].innerHTML = g + poi + labels(false) + missing;
```
